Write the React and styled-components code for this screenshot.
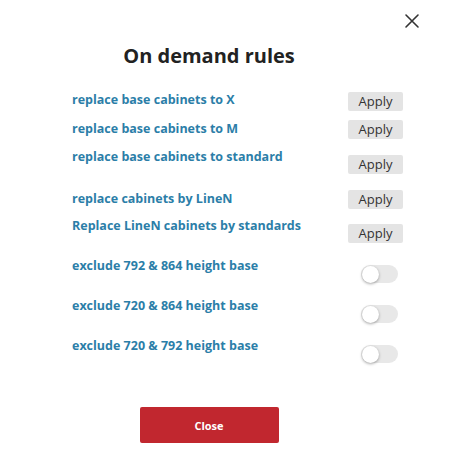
import React, { useState } from "react";
import styled, { createGlobalStyle } from "styled-components";

const Global = createGlobalStyle`
  html, body { margin: 0; padding: 0; background: #fff; }
  body { font-family: "Open Sans", "Noto Sans", sans-serif; }
`;

const Modal = styled.div`
  position: relative;
  width: 458px;
  height: 465px;
  background: #fff;
  padding-top: 44px;
  box-sizing: border-box;
`;

const CloseIcon = styled.button`
  position: absolute;
  top: 12px;
  right: 37px;
  width: 18px;
  height: 18px;
  padding: 0;
  border: none;
  background: transparent;
  display: flex;
  align-items: center;
  justify-content: center;
  cursor: pointer;
`;

const Title = styled.h2`
  width: 418px;
  margin: 0;
  text-align: center;
  font-size: 20px;
  line-height: 24px;
  font-weight: 700;
  color: #222;
`;

const Rules = styled.div`
  display: flex;
  flex-direction: column;
  padding: 0 55px 0 72px;
`;

const Row = styled.div`
  display: flex;
  justify-content: space-between;
  align-items: flex-start;
  margin-top: ${(p) => p.$gap}px;
`;

const Label = styled.span`
  font-size: 12.5px;
  line-height: 16px;
  font-weight: 700;
  color: #2b7ea8;
  padding-top: ${(p) => p.$offset || 0}px;
`;

const ApplyButton = styled.button`
  margin-top: ${(p) => p.$offset || 0}px;
  width: 55px;
  height: 19px;
  padding: 0;
  border: none;
  border-radius: 2px;
  background: #e4e4e4;
  color: #333;
  font-family: "Open Sans", sans-serif;
  font-size: 13px;
  line-height: 19px;
  cursor: pointer;
`;

const Toggle = styled.button`
  margin-top: ${(p) => p.$offset || 0}px;
  margin-right: 5px;
  position: relative;
  width: 37px;
  height: 18px;
  padding: 0;
  border: none;
  border-radius: 9px;
  background: ${(p) => (p.$on ? "#2b7ea8" : "#e8e8e8")};
  cursor: pointer;
`;

const Knob = styled.span`
  position: absolute;
  top: 0.5px;
  left: ${(p) => (p.$on ? "20px" : "0.5px")};
  width: 17px;
  height: 17px;
  border-radius: 50%;
  background: #fff;
  box-shadow: 0 1px 3px rgba(0, 0, 0, 0.35);
`;

const Footer = styled.div`
  width: 418px;
  display: flex;
  justify-content: center;
  margin-top: 44px;
`;

const CloseButton = styled.button`
  width: 139px;
  height: 36px;
  border: none;
  border-radius: 2px;
  background: #c1272f;
  color: #fff;
  font-family: "Open Sans", sans-serif;
  font-size: 11px;
  font-weight: 700;
  cursor: pointer;
`;

const applyRules = [
  { label: "replace base cabinets to X", gap: 24, l: 0, b: 0 },
  { label: "replace base cabinets to M", gap: 9, l: 1, b: 0 },
  { label: "replace base cabinets to standard", gap: 10, l: 0, b: 6 },
  { label: "replace cabinets by LineN", gap: 16, l: 1, b: 0 },
  { label: "Replace LineN cabinets by standards", gap: 9, l: 0, b: 6 },
];

const toggleRules = [
  "exclude 792 & 864 height base",
  "exclude 720 & 864 height base",
  "exclude 720 & 792 height base",
];

export default function App() {
  const [on, setOn] = useState([false, false, false]);
  return (
    <>
      <Global />
      <Modal>
        <CloseIcon aria-label="close">
          <svg width="16" height="16" viewBox="0 0 16 16">
            <path d="M2 2 L14 14 M14 2 L2 14" stroke="#333" strokeWidth="1.6" strokeLinecap="round" />
          </svg>
        </CloseIcon>
        <Title>On demand rules</Title>
        <Rules>
          {applyRules.map((r) => (
            <Row key={r.label} $gap={r.gap}>
              <Label $offset={r.l}>{r.label}</Label>
              <ApplyButton $offset={r.b}>Apply</ApplyButton>
            </Row>
          ))}
          {toggleRules.map((t, i) => (
            <Row key={t} $gap={15}>
              <Label>{t}</Label>
              <Toggle
                $offset={7}
                $on={on[i]}
                onClick={() => setOn(on.map((v, j) => (j === i ? !v : v)))}
              >
                <Knob $on={on[i]} />
              </Toggle>
            </Row>
          ))}
        </Rules>
        <Footer>
          <CloseButton>Close</CloseButton>
        </Footer>
      </Modal>
    </>
  );
}
